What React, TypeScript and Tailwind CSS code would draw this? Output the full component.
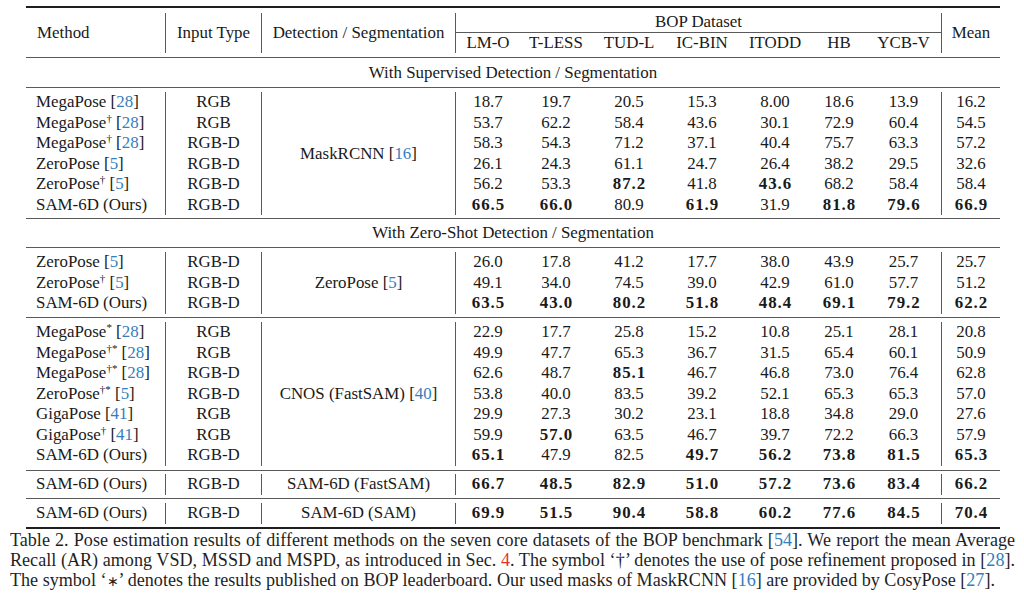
import React from "react";

type Row = { m: string; sup?: string; cite: string; input: string; vals: string[] };
type Group = { det: React.ReactNode; rows: Row[]; pad: string };

const Cite = ({ n }: { n: string }) => (
  <>
    [<span className="text-[#367dbd]">{n}</span>]
  </>
);

const groups: Group[] = [
  {
    det: (
      <>
        MaskRCNN <Cite n="16" />
      </>
    ),
    pad: "pt-[4px] pb-[3px]",
    rows: [
      { m: "MegaPose", cite: "28", input: "RGB", vals: ["18.7", "19.7", "20.5", "15.3", "8.00", "18.6", "13.9", "16.2"] },
      { m: "MegaPose", sup: "†", cite: "28", input: "RGB", vals: ["53.7", "62.2", "58.4", "43.6", "30.1", "72.9", "60.4", "54.5"] },
      { m: "MegaPose", sup: "†", cite: "28", input: "RGB-D", vals: ["58.3", "54.3", "71.2", "37.1", "40.4", "75.7", "63.3", "57.2"] },
      { m: "ZeroPose", cite: "5", input: "RGB-D", vals: ["26.1", "24.3", "61.1", "24.7", "26.4", "38.2", "29.5", "32.6"] },
      { m: "ZeroPose", sup: "†", cite: "5", input: "RGB-D", vals: ["56.2", "53.3", "!87.2", "41.8", "!43.6", "68.2", "58.4", "58.4"] },
      { m: "SAM-6D (Ours)", cite: "", input: "RGB-D", vals: ["!66.5", "!66.0", "80.9", "!61.9", "31.9", "!81.8", "!79.6", "!66.9"] },
    ],
  },
  {
    det: (
      <>
        ZeroPose <Cite n="5" />
      </>
    ),
    pad: "pt-[4px] pb-[3.5px]",
    rows: [
      { m: "ZeroPose", cite: "5", input: "RGB-D", vals: ["26.0", "17.8", "41.2", "17.7", "38.0", "43.9", "25.7", "25.7"] },
      { m: "ZeroPose", sup: "†", cite: "5", input: "RGB-D", vals: ["49.1", "34.0", "74.5", "39.0", "42.9", "61.0", "57.7", "51.2"] },
      { m: "SAM-6D (Ours)", cite: "", input: "RGB-D", vals: ["!63.5", "!43.0", "!80.2", "!51.8", "!48.4", "!69.1", "!79.2", "!62.2"] },
    ],
  },
  {
    det: (
      <>
        CNOS (FastSAM) <Cite n="40" />
      </>
    ),
    pad: "pt-[4px] pb-[4.5px]",
    rows: [
      { m: "MegaPose", sup: "*", cite: "28", input: "RGB", vals: ["22.9", "17.7", "25.8", "15.2", "10.8", "25.1", "28.1", "20.8"] },
      { m: "MegaPose", sup: "†*", cite: "28", input: "RGB", vals: ["49.9", "47.7", "65.3", "36.7", "31.5", "65.4", "60.1", "50.9"] },
      { m: "MegaPose", sup: "†*", cite: "28", input: "RGB-D", vals: ["62.6", "48.7", "!85.1", "46.7", "46.8", "73.0", "76.4", "62.8"] },
      { m: "ZeroPose", sup: "†*", cite: "5", input: "RGB-D", vals: ["53.8", "40.0", "83.5", "39.2", "52.1", "65.3", "65.3", "57.0"] },
      { m: "GigaPose", cite: "41", input: "RGB", vals: ["29.9", "27.3", "30.2", "23.1", "18.8", "34.8", "29.0", "27.6"] },
      { m: "GigaPose", sup: "†", cite: "41", input: "RGB", vals: ["59.9", "!57.0", "63.5", "46.7", "39.7", "72.2", "66.3", "57.9"] },
      { m: "SAM-6D (Ours)", cite: "", input: "RGB-D", vals: ["!65.1", "47.9", "82.5", "!49.7", "!56.2", "!73.8", "!81.5", "!65.3"] },
    ],
  },
  {
    det: <>SAM-6D (FastSAM)</>,
    pad: "pt-[3px] pb-[3.5px]",
    rows: [
      { m: "SAM-6D (Ours)", cite: "", input: "RGB-D", vals: ["!66.7", "!48.5", "!82.9", "!51.0", "!57.2", "!73.6", "!83.4", "!66.2"] },
    ],
  },
  {
    det: <>SAM-6D (SAM)</>,
    pad: "pt-[4px] pb-[3.5px]",
    rows: [
      { m: "SAM-6D (Ours)", cite: "", input: "RGB-D", vals: ["!69.9", "!51.5", "!90.4", "!58.8", "!60.2", "!77.6", "!84.5", "!70.4"] },
    ],
  },
];

const spans: Record<number, string> = {
  1: "row-span-1",
  3: "row-span-3",
  6: "row-span-6",
  7: "row-span-7",
};

const GRID =
  "grid grid-cols-[139px_96px_194px_65px_72px_74px_72px_74px_54px_75px_59px]";

const datasets = ["LM-O", "T-LESS", "TUD-L", "IC-BIN", "ITODD", "HB", "YCB-V"];

const MidRule = () => <div className="h-px bg-[#5a5a5a]" />;
const HeavyRule = () => <div className="h-[2px] bg-[#1f1f1f]" />;

function Val({ v, i }: { v: string; i: number }) {
  const bold = v.startsWith("!");
  const text = bold ? v.slice(1) : v;
  const border = i === 0 || i === 7 ? "border-l border-[#5a5a5a]" : "";
  return (
    <div className={`flex items-center justify-center ${border}`}>
      <span className={bold ? "font-bold tracking-[1px] pl-[1px]" : ""}>{text}</span>
    </div>
  );
}

function GroupBlock({ g }: { g: Group }) {
  return (
    <div className={g.pad}>
      <div className={`${GRID} auto-rows-[20.5px]`}>
        {g.rows.map((r, ri) => (
          <React.Fragment key={ri}>
            <div className="flex items-center pl-[10px] whitespace-nowrap">
              <span>
                {r.m}
                {r.sup && <sup className="text-[11px] top-[-0.55em]">{r.sup}</sup>}
                {r.cite && (
                  <>
                    {" "}
                    <Cite n={r.cite} />
                  </>
                )}
              </span>
            </div>
            <div className="flex items-center justify-center border-l border-[#5a5a5a]">{r.input}</div>
            {ri === 0 && (
              <div
                className={`${spans[g.rows.length]} flex items-center justify-center border-l border-[#5a5a5a] whitespace-nowrap`}
              >
                <span>{g.det}</span>
              </div>
            )}
            {r.vals.map((v, i) => (
              <Val key={i} v={v} i={i} />
            ))}
          </React.Fragment>
        ))}
      </div>
    </div>
  );
}

export default function App() {
  return (
    <div
      className="w-[1024px] h-[606px] bg-white overflow-hidden text-[#1a1a1a] text-[16.9px] leading-[20px]"
      style={{ fontFamily: '"Liberation Serif", "Times New Roman", serif' }}
    >
      <div className="pt-[6px] ml-[26px] w-[974px]">
        <HeavyRule />
        {/* header */}
        <div className="pt-[5px] pb-[4px]">
          <div className={`${GRID} grid-rows-[20px_20px]`}>
            <div className="row-span-2 flex items-center pl-[11px]">Method</div>
            <div className="row-span-2 flex items-center justify-center border-l border-[#5a5a5a]">Input Type</div>
            <div className="row-span-2 flex items-center justify-center border-l border-[#5a5a5a]">
              Detection / Segmentation
            </div>
            <div className="col-span-7 flex items-center justify-center border-l border-b border-[#5a5a5a] pb-[1px]">
              BOP Dataset
            </div>
            <div className="row-span-2 flex items-center justify-center border-l border-[#5a5a5a]">Mean</div>
            {datasets.map((d, i) => (
              <div
                key={d}
                className={`flex items-center justify-center ${i === 0 ? "border-l border-[#5a5a5a]" : ""}`}
              >
                {d}
              </div>
            ))}
          </div>
        </div>
        <MidRule />
        <div className="h-[29px] flex items-center justify-center">With Supervised Detection / Segmentation</div>
        <MidRule />
        <GroupBlock g={groups[0]} />
        <MidRule />
        <div className="h-[28px] flex items-center justify-center">With Zero-Shot Detection / Segmentation</div>
        <MidRule />
        <GroupBlock g={groups[1]} />
        <MidRule />
        <GroupBlock g={groups[2]} />
        <MidRule />
        <GroupBlock g={groups[3]} />
        <MidRule />
        <GroupBlock g={groups[4]} />
        <HeavyRule />
      </div>
      <div className="mt-[1px] ml-[10px] w-[1005px] text-[#1f1f1f] text-[18.1px] leading-[20px]">
        <div className="text-justify [text-align-last:justify]">
          Table 2. Pose estimation results of different methods on the seven core datasets of the BOP benchmark [
          <span className="text-[#367dbd]">54</span>]. We report the mean Average
        </div>
        <div className="text-justify [text-align-last:justify]">
          Recall (AR) among VSD, MSSD and MSPD, as introduced in Sec. <span className="text-[#e4322b]">4</span>. The
          symbol ‘†’ denotes the use of pose refinement proposed in [<span className="text-[#367dbd]">28</span>].
        </div>
        <div>
          The symbol ‘<span className="text-[14px]">∗</span>’ denotes the results published on BOP leaderboard. Our
          used masks of MaskRCNN [<span className="text-[#367dbd]">16</span>] are provided by CosyPose [
          <span className="text-[#367dbd]">27</span>].
        </div>
      </div>
    </div>
  );
}
